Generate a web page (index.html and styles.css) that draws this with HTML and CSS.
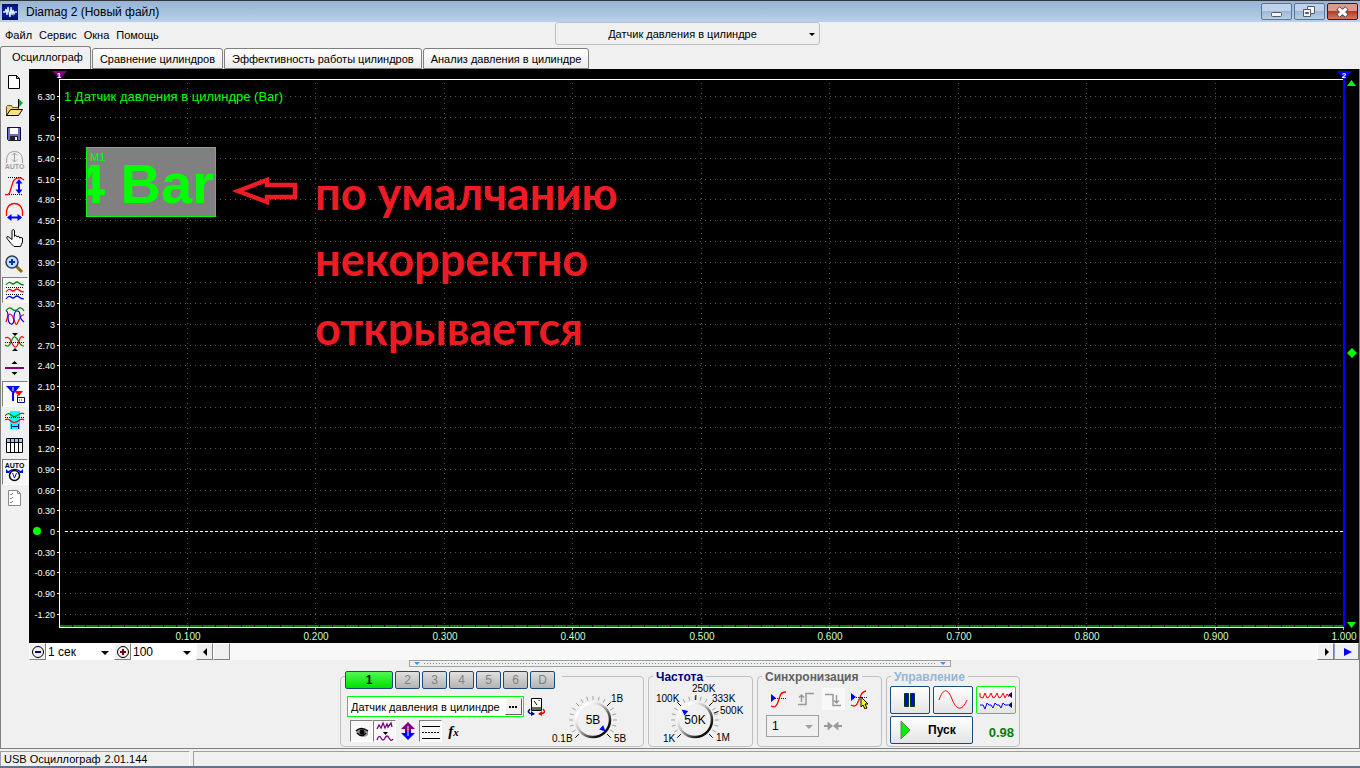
FILE: index.html
```html
<!DOCTYPE html>
<html lang="ru">
<head>
    <meta charset="UTF-8">
    <meta name="viewport" content="width=device-width, initial-scale=1.0">
    <title>Diamag 2 (Новый файл)</title>
    <link rel="stylesheet" href="styles.css">
</head>
<body>
    <header class="titlebar">
        <svg class="app-icon" width="16" height="16" viewBox="0 0 16 16">
            <rect width="16" height="16" fill="#0a1a8c"/>
            <path d="M0 13h16v3H0zM0 0h16v2H0z" fill="#0b1260"/>
            <path d="M1 8h2l1-3 1 6 1-8 2 10 1-10 1 8 1-5 1 4 1-2h2" fill="none" stroke="#d8ecff" stroke-width="1.3"/>
        </svg>
        <span class="title">Diamag 2 (Новый файл)</span>
        <div class="window-buttons">
            <button class="win-btn" aria-label="Свернуть">
                <svg width="30" height="16" viewBox="0 0 30 16"><rect x="9.5" y="8.500" width="10" height="4" rx="1" fill="#f4f4f4" stroke="#555b66"/></svg>
            </button>
            <button class="win-btn" aria-label="Восстановить">
                <svg width="30" height="16" viewBox="0 0 30 16"><path d="M12.500 2.500h7v7h-7z" fill="#f4f4f4" stroke="#555b66"/><path d="M8.500 5.500h7v7h-7z" fill="#f4f4f4" stroke="#555b66"/><path d="M10.500 8.500h3v1h-3z" fill="#9fb9d5" stroke="#555b66"/></svg>
            </button>
            <button class="win-btn win-close" aria-label="Закрыть">
                <svg width="30" height="16" viewBox="0 0 30 16"><path d="M10 4l9 8M19 4l-9 8" stroke="#4f4a55" stroke-width="5"/><path d="M10.500 4.500l8 7M18.500 4.500l-8 7" stroke="#fff" stroke-width="3"/></svg>
            </button>
        </div>
    </header>

    <div class="menubar">
        <nav class="menu">
            <a href="#">Файл</a>
            <a href="#">Сервис</a>
            <a href="#">Окна</a>
            <a href="#">Помощь</a>
        </nav>
        <span class="select-wrap sensor-select">
            <select aria-label="Тип датчика"><option>Датчик давления в цилиндре</option></select>
        </span>
    </div>

    <div class="tabs" role="tablist">
        <button class="tab active" role="tab">Осциллограф</button>
        <button class="tab" role="tab">Сравнение цилиндров</button>
        <button class="tab" role="tab">Эффективность работы цилиндров</button>
        <button class="tab" role="tab">Анализ давления в цилиндре</button>
    </div>

    <main class="workspace">
        <div class="main-row">
            <div class="toolbar">
                <button class="tool" aria-label="Новый"><svg viewBox="0 0 20 20"><path d="M3.500 3.500h8l3 3v10h-11zM11.500 3.500v3h3" fill="#fff" stroke="#000"/></svg></button>
                <button class="tool" aria-label="Открыть"><svg viewBox="0 0 20 20"><path d="M1.500 17.500v-9l1-1h4l1 2h6v8z" fill="#f7d46b" stroke="#6b5310"/><path d="M1.500 17.500l4-6h12l-4 6z" fill="#fbe08a" stroke="#000"/><path d="M13.500 1v9" stroke="#000"/><path d="M14 1l4 4-4 4z" fill="#00b030"/></svg></button>
                <button class="tool" aria-label="Сохранить"><svg viewBox="0 0 20 20"><path d="M2.500 3.500h13v13h-12l-1-1z" fill="#6a6fc0" stroke="#101030"/><path d="M5 4h8v6H5z" fill="#fff"/><path d="M5 12h8v5H5z" fill="#222"/><path d="M10 13h2v3h-2z" fill="#fff"/></svg></button>
                <button class="tool" aria-label="Автомасштаб" disabled><svg viewBox="0 0 20 20"><path d="M1.500 13V10Q2 1.500 9.500 1.500T17.500 10v3M9.500 3v9M7 5.500L9.500 3l2.500 2.500M7 9.500L9.500 12l2.500-2.500" fill="none" stroke="#a0a0a0"/><text x="9.500" y="19" class="auto-text" fill="#a0a0a0">AUTO</text></svg></button>
                <button class="tool" aria-label="Масштаб по вертикали"><svg viewBox="0 0 20 20"><path d="M0 18.500q4 1 5-3L8 6q2-5 8-4l3 2" fill="none" stroke="#f00" stroke-width="1.300"/><path d="M3 1.500h13M4 18.500h13" stroke="#000" stroke-dasharray="1 1"/><path d="M14 5v11" stroke="#00f" stroke-width="2"/><path d="M10.500 7.500L14 3l3.500 4.500zM10.500 13.500L14 18l3.500-4.500z" fill="#00f"/></svg></button>
                <button class="tool" aria-label="Масштаб по горизонтали"><svg viewBox="0 0 20 20"><path d="M1.500 14V9Q3 1.500 9.500 1.500T17.500 9v5" fill="none" stroke="#f00" stroke-width="1.300"/><path d="M4 15.500h12" stroke="#00f" stroke-width="2"/><path d="M6.500 12L2 15.500 6.500 19zM12.500 12l4.500 3.500-4.500 3.500z" fill="#00f"/></svg></button>
                <button class="tool" aria-label="Рука"><svg viewBox="0 0 20 20"><path d="M9 18.500l-3-3-4-5q-1-2 1-2l4 3V2.500q1-2 2.500 0v6q1-2 2.500 0v.5q1-1.500 2.500 0v1q1.500-1 3 0v4l-2 4.500z" fill="#fff" stroke="#000"/></svg></button>
                <button class="tool" aria-label="Лупа"><svg viewBox="0 0 20 20"><path d="M11 12l6 6" stroke="#8a6d10" stroke-width="3"/><circle cx="7" cy="8" r="6" fill="#bfe0ff" stroke="#333c5a" stroke-width="1.500"/><path d="M7 5v6M4 8h6" stroke="#0030c0" stroke-width="2"/></svg></button>
                <button class="tool pressed" aria-label="Раздельные графики"><svg viewBox="0 0 20 20"><path d="M1 5q3-4 5-2t4 0 4 0 5 2" fill="none" stroke="#080" stroke-width="1.200"/><path d="M1 12q3-4 5-2t4 0 4 0 5 2" fill="none" stroke="#f00" stroke-width="1.200"/><path d="M1 19q3-4 5-2t4 0 4 0 5 2" fill="none" stroke="#00f" stroke-width="1.200"/><path d="M1 7.500h18M1 14.500h18" stroke="#000" stroke-dasharray="1 1"/></svg></button>
                <button class="tool" aria-label="Наложенные графики"><svg viewBox="0 0 20 20"><path d="M1 5q3-5 6-2t6 0 6 2" fill="none" stroke="#080" stroke-width="1.200"/><path d="M1 16q2-8 4-8t4 6 3 4 3-6 4-3" fill="none" stroke="#f00" stroke-width="1.200"/><path d="M1 5q2 0 2 6t3 7 3-6 3-7 3 4 4 7" fill="none" stroke="#00f" stroke-width="1.200"/></svg></button>
                <button class="tool" aria-label="Сжать графики"><svg viewBox="0 0 20 20"><path d="M0 13q4 3 6-3t4-5 4 5 5 4" fill="none" stroke="#080" stroke-width="1.200"/><path d="M0 6q4-2 6 3t4 6 4-6 5-3" fill="none" stroke="#f00" stroke-width="1.200"/><path d="M0 10.500h19" stroke="#000" stroke-dasharray="1 1"/><path d="M7 1h6l-3 3zM7 19h6l-3-3z"/></svg></button>
                <button class="tool" aria-label="Нулевая линия"><svg viewBox="0 0 20 20"><path d="M6.500 6h6l-3-3zM6.500 14h6l-3 3z"/><path d="M0 10h19" stroke="#800080" stroke-width="2"/></svg></button>
                <button class="tool pressed" aria-label="Маркеры"><svg viewBox="0 0 20 20"><path d="M1 2h14L8.500 10zM7 9h2v8H7z" fill="#00f"/><path d="M9 7h9l-4 5zM12 11h1v5h-1z" fill="#f00"/><path d="M8 3v4" stroke="#fff"/><path d="M12.500 13.500h7v5h-7z" fill="#fff" stroke="#000080"/><path d="M14 16h1M16 16h1" stroke="#00f"/></svg></button>
                <button class="tool" aria-label="Измерение"><svg viewBox="0 0 20 20"><path d="M5 1h10v18H5z" fill="#0ff"/><path d="M0 6q3-4 6-1t7 0 6-1" fill="none" stroke="#080" stroke-width="1.200"/><path d="M0 10q3-2 6 1t7 0 6-1" fill="none" stroke="#f00" stroke-width="1.200"/><path d="M0 7.500h19" stroke="#000" stroke-dasharray="1 1"/><path d="M6.500 14v5M13.500 14v5M6 16.500h8" stroke="#000080"/></svg></button>
                <button class="tool" aria-label="Таблица"><svg viewBox="0 0 20 20"><path d="M1.500 2.500h16v14h-16z" fill="#fff" stroke="#000"/><path d="M2 3h15v3H2z" fill="#9cc8f0"/><path d="M1 6.500h17M5.500 3v13M9.500 3v13M13.500 3v13" stroke="#000"/></svg></button>
                <button class="tool pressed" aria-label="Авто"><svg viewBox="0 0 20 20"><text x="9.500" y="6" class="auto-text">AUTO</text><path d="M3 10q7-5 13 0" fill="none" stroke="#00f" stroke-width="1.500"/><path d="M1 7v4h4zM18 7v4h-4z" fill="#00f"/><circle cx="9.500" cy="13.500" r="5" fill="#fff" stroke="#000" stroke-width="1.500"/><path d="M7.500 11l2 5 2-5" fill="none" stroke="#00f"/></svg></button>
                <button class="tool" aria-label="Отчёт" disabled><svg viewBox="0 0 20 20"><path d="M3.500 2.500h9l3 3v12h-12zM12.500 2.500v3h3" fill="#fff" stroke="#888"/><path d="M5 6l1 1 2-2M5 10l1 1 2-2M5 14l1 1 2-2" fill="none" stroke="#888"/></svg></button>
            </div>

            <div class="scope">
                <svg id="chart" class="chart"></svg>
                <div class="channel-title">1 Датчик давления в цилиндре (Bar)</div>
                <div class="measure-box">
                    <span class="measure-name">M1</span>
                    <span class="measure-value">4 Bar</span>
                </div>
                <svg class="note-arrow" width="68" height="28" viewBox="0 0 68 28">
                    <path d="M7 14L36 3v5h28v12H36v5z" fill="none" stroke="#ed1c24" stroke-width="4.500"/>
                </svg>
                <div class="note">
                    <p>по умалчанию</p>
                    <p>некорректно</p>
                    <p>открывается</p>
                </div>
            </div>
        </div>

        <div class="timebar">
            <button class="bar-btn" aria-label="Уменьшить"><svg width="14" height="14" viewBox="0 0 14 14"><circle cx="7" cy="7" r="5.500" fill="none" stroke="#000"/><path d="M4 7h6" stroke="#000080" stroke-width="2"/></svg></button>
            <span class="select-wrap time-select"><select aria-label="Время"><option>1 сек</option></select></span>
            <button class="bar-btn" aria-label="Увеличить"><svg width="14" height="14" viewBox="0 0 14 14"><circle cx="7" cy="7" r="5.500" fill="none" stroke="#000"/><path d="M4 7h6M7 4v6" stroke="#800000" stroke-width="2"/></svg></button>
            <span class="select-wrap zoom-select"><select aria-label="Масштаб"><option>100</option></select></span>
            <button class="bar-btn" aria-label="Влево"><svg width="14" height="14" viewBox="0 0 14 14"><path d="M9 3v8L5 7z"/></svg></button>
            <div class="track"><button class="bar-btn thumb" aria-label="Ползунок"></button></div>
            <button class="bar-btn" aria-label="Вправо"><svg width="14" height="14" viewBox="0 0 14 14"><path d="M6 3v8l4-4z"/></svg></button>
            <button class="bar-btn play-btn" aria-label="Воспроизвести"><svg width="14" height="14" viewBox="0 0 14 14"><path d="M4 3v8l8-4z" fill="#00f"/></svg></button>
        </div>

        <div class="panel">
            <div class="splitter"></div>
            <div class="groups">
                <fieldset class="group group-channels">
                    <legend class="channels">
                        <button class="channel on">1</button>
                        <button class="channel">2</button>
                        <button class="channel">3</button>
                        <button class="channel">4</button>
                        <button class="channel">5</button>
                        <button class="channel">6</button>
                        <button class="channel">D</button>
                    </legend>
                    <div class="channel-left">
                        <div class="sensor-row">
                            <div class="sensor-field">
                                <input type="text" aria-label="Датчик канала" value="Датчик давления в цилиндре">
                                <button class="more-btn" aria-label="Выбрать"><svg width="15" height="15" viewBox="0 0 15 15"><path d="M3 7h2v2H3zM6 7h2v2H6zM9 7h2v2H9z"/></svg></button>
                            </div>
                            <svg width="20" height="20" viewBox="0 0 20 20"><path d="M4.500 1.500h10v12h-10z" fill="#fff" stroke="#000"/><path d="M5 11h9v2H5z" fill="#666"/><path d="M5 10.500h9" stroke="#0a0"/><path d="M7 4l3 4M12 3v1" stroke="#000"/><path d="M3 12q-4 4 2 5" fill="none" stroke="#000080" stroke-width="1.500"/><path d="M4 14v5l4-2z" fill="#000080"/><path d="M16 12q4 4-3 5" fill="none" stroke="#f00" stroke-width="1.500"/><path d="M15 14v5l-4-2z" fill="#f00"/></svg>
                        </div>
                        <div class="icon-row">
                            <button class="mini pressed" aria-label="Показать"><svg viewBox="0 0 20 20"><path d="M4 11q6-7 12-1v4q-5 4-9 0z" fill="#999"/><path d="M4 10q5-5 12 0M5 12q5 5 9 0" stroke="#000" stroke-width="1.500" fill="none"/><circle cx="10" cy="11" r="2.500"/></svg></button>
                            <button class="mini pressed" aria-label="Фильтр"><svg viewBox="0 0 20 20"><path d="M2 8l2-4 2 3 2-5 2 5 2-4 1 3 3-4 1 4M2 19q2-6 4-2t4 0 4 0 4 1" fill="none" stroke="#800080" stroke-width="1.300"/><path d="M8 11h5l-2.500 3z"/></svg></button>
                            <button class="mini" aria-label="Сдвиг"><svg viewBox="0 0 20 20"><path d="M10 1l7 7h-4v3H7V8H3z" fill="#800080"/><path d="M10 19l7-7h-4v-2H7v2H3z" fill="#00f"/><path d="M10 5v10" stroke="#f0f0f0"/></svg></button>
                            <button class="mini pressed" aria-label="Линии"><svg viewBox="0 0 20 20"><path d="M1 5.500h18M1 17.500h18" stroke="#000"/><path d="M1 11.500h18" stroke="#000" stroke-dasharray="2 1"/></svg></button>
                            <button class="mini fx" aria-label="Функция">f<small>x</small></button>
                        </div>
                    </div>
                    <svg id="rangeKnob" class="knob" width="92" height="66" viewBox="0 0 92 66"></svg>
                </fieldset>

                <fieldset class="group group-freq">
                    <legend>Частота</legend>
                    <svg id="freqKnob" class="knob" width="100" height="66" viewBox="0 0 100 66"></svg>
                </fieldset>

                <fieldset class="group group-sync">
                    <legend>Синхронизация</legend>
                    <div class="sync-icons">
                        <button class="sync-btn" aria-label="Уровень"><svg viewBox="0 0 20 20"><path d="M2 17q5 3 7-4l2-6q1-4 6-4" fill="none" stroke="#f00" stroke-width="1.300"/><path d="M2 5l5 4-5 4z" fill="#00f"/><path d="M6 9.500h12" stroke="#00f" stroke-dasharray="1 1"/></svg></button>
                        <button class="sync-btn" aria-label="Фронт"><svg viewBox="0 0 20 20"><path d="M2 15.500h8v-11h8M5.500 13V6M3 8.500L5.500 6 8 8.500" fill="none" stroke="#999" stroke-width="1.500"/></svg></button>
                        <button class="sync-btn dither" aria-label="Спад"><svg viewBox="0 0 20 20"><path d="M2 5.500h8v11h8M13.500 6v8M11 11.500l2.500 2.500 2.500-2.500" fill="none" stroke="#999" stroke-width="1.500"/></svg></button>
                        <button class="sync-btn" aria-label="Автоуровень"><svg viewBox="0 0 20 20"><path d="M1 16q5 3 7-3l3-7q1-3 5-4" fill="none" stroke="#f00" stroke-width="1.300"/><path d="M1 4l5 4-5 4z" fill="#00f"/><path d="M6 8.500h11" stroke="#00f" stroke-dasharray="1 1"/><path d="M11 8l7 7h-3l2 4-2 1-2-4-2 2z" fill="#ff0" stroke="#000"/></svg></button>
                    </div>
                    <div class="sync-row">
                        <span class="select-wrap sync-select"><select aria-label="Канал синхронизации" disabled><option>1</option></select></span>
                        <svg width="18" height="10" viewBox="0 0 20 10"><path d="M0 4h4V0l6 5-6 5V6H0zM20 4h-4V0l-6 5 6 5V6h4z" fill="#999"/></svg>
                    </div>
                </fieldset>

                <fieldset class="group group-control">
                    <legend>Управление</legend>
                    <div class="control-grid">
                        <button class="ctl" aria-label="Пауза"><svg width="36" height="24" viewBox="0 0 36 24"><path d="M12.500 5.500h4v13h-4zM18.500 5.500h4v13h-4z" fill="#00f" stroke="#004000"/></svg></button>
                        <button class="ctl" aria-label="Синус"><svg width="36" height="24" viewBox="0 0 36 24"><path d="M4 12C8 0 13 0 17 11S27 24 32 12" fill="none" stroke="#f00"/></svg></button>
                        <button class="ctl ctl-on" aria-label="Сигналы"><svg width="36" height="24" viewBox="0 0 36 24"><path d="M2 5v4l3 1 2-5 2 5 2-1 2-4 2 5 2-1 2-4 2 5 2-1 2-4 2 5 2-4 2 3" fill="none" stroke="#f00"/><path d="M2 17h3l2 4 2-6 2 2h2l2 3 2-5 2 2h2l2 3 2-5 2 2h3" fill="none" stroke="#00f"/><path d="M34 4v6l-4-3zM34 14v6l-4-3z" fill="#000080"/></svg></button>
                        <button class="ctl start-btn"><svg width="14" height="20" viewBox="0 0 14 20"><path d="M3 1v18l9-9z" fill="#00f000" stroke="#777"/></svg><span>Пуск</span></button>
                        <output class="level">0.98</output>
                    </div>
                </fieldset>
            </div>
        </div>
    </main>

    <footer class="statusbar">
        <div class="status-cell status-name"><span>USB Осциллограф</span><span>2.01.144</span></div>
        <div class="status-cell status-rest"></div>
    </footer>

    <script>
        const chart = document.getElementById('chart');

        function line(x1, y1, x2, y2, cls) {
            return `<line x1="${x1}" y1="${y1}" x2="${x2}" y2="${y2}" class="${cls}"/>`;
        }

        function drawChart() {
            const w = chart.clientWidth;
            const h = chart.clientHeight;
            const left = 30, right = w - 15, top = 10, bottom = h - 16;
            const maxV = 6.544, minV = -1.39;
            const yOf = v => Math.round(top + (maxV - v) / (maxV - minV) * (bottom - top));
            let out = '';

            for (let i = 21; i >= -4; i--) {
                const v = i * 0.3;
                const y = yOf(v);
                const label = i % 10 === 0 ? v.toFixed(0) : v.toFixed(2);
                out += line(left + 6, y + 0.5, right, y + 0.5, i === 0 ? 'zero' : 'grid');
                out += line(left - 2, y + 0.5, left + 1, y + 0.5, 'axis');
                out += `<text x="${left - 4}" y="${y + 4}" class="y-label">${label}</text>`;
            }

            for (let i = 1; i <= 10; i++) {
                const x = Math.round(left + (right - left) * i / 10);
                if (i < 10) {
                    out += line(x - 0.5, top + 4, x - 0.5, bottom, 'grid');
                }
                out += line(x - 0.5, bottom, x - 0.5, bottom + 3, 'tick');
                out += `<text x="${x}" y="${h - 3}" class="x-label">${(i / 10).toFixed(3)}</text>`;
            }

            out += line(left, top + 0.5, right, top + 0.5, 'axis');
            out += line(left + 0.5, top, left + 0.5, bottom, 'axis');
            out += line(left, bottom + 0.5, right, bottom + 0.5, 'axis');
            out += line(left + 1, bottom - 1, right, bottom - 1, 'signal');
            out += line(right, top - 2, right, bottom, 'cursor');

            // cursor flags and level markers
            out += `<path d="M${left - 7} 2h15l-7 8z" fill="#800080"/><text x="${left}" y="9" class="flag">1</text>`;
            out += `<path d="M${right - 7} 2h15l-8 8z" fill="#00f"/><text x="${right}" y="9" class="flag">2</text>`;
            out += `<path d="M${w - 12} 17h9l-4.500-6zM${w - 12} ${h - 21}h9l-4.500 6z" fill="#0f0"/>`;
            out += `<path d="M${w - 12} ${top + (bottom - top) / 2}l5-5 5 5-5 5z" fill="#0f0"/>`;
            out += `<circle cx="8" cy="${yOf(0)}" r="4" fill="#0f0"/>`;
            chart.innerHTML = out;
        }

        function drawKnob(id, cx, cy, value, pointer, labels) {
            let out = '<defs><linearGradient id="' + id + 'G" x1="0" y1="0" x2="1" y2="1"><stop offset="0.2" stop-color="#fff"/><stop offset="0.45" stop-color="#bbb"/><stop offset="0.8" stop-color="#111"/></linearGradient></defs>';
            const point = (a, r) => {
                const t = a * Math.PI / 180;
                return [(cx + Math.sin(t) * r).toFixed(1), (cy - Math.cos(t) * r).toFixed(1)];
            };
            for (let a = -120; a <= 120; a += 15) {
                out += line(...point(a, 20), ...point(a, 24), 'knob-tick');
            }
            labels.forEach(([a, text, x, y]) => {
                out += line(...point(a, 20), ...point(a, 25), 'knob-mark');
                out += `<text x="${x}" y="${y}" class="knob-label">${text}</text>`;
            });
            out += `<circle cx="${cx}" cy="${cy}" r="17" fill="#f0f0f0" stroke="url(#${id}G)" stroke-width="2.500"/>`;
            const [px, py] = point(pointer, 14);
            out += `<path d="M-3 3h6L0-3z" fill="#00f" transform="translate(${px} ${py}) rotate(${pointer})"/>`;
            out += `<text x="${cx}" y="${cy + 4}" class="knob-value">${value}</text>`;
            document.getElementById(id).innerHTML = out;
        }

        drawChart();
        window.addEventListener('resize', drawChart);
        drawKnob('rangeKnob', 42, 39, '5В', 132, [
            [-135, '0.1В', 1, 61], [45, '1В', 60, 21], [135, '5В', 63, 61]
        ]);
        drawKnob('freqKnob', 46, 39, '50K', -52, [
            [-135, '1K', 14, 61], [-45, '100K', 7, 21], [2, '250K', 43, 11],
            [45, '333K', 63, 21], [70, '500K', 71, 33], [135, '1M', 67, 60]
        ]);
    </script>
</body>
</html>
```

FILE: styles.css
```css
* {
    box-sizing: border-box;
}
body {
    margin: 0;
    height: 100vh;
    display: flex;
    flex-direction: column;
    overflow: hidden;
    background-color: #f0f0f0;
    color: #000;
    font-family: "Liberation Sans", Arial, sans-serif;
    font-size: 11px;
}
button, select, input {
    font-family: inherit;
    font-size: inherit;
    color: inherit;
    margin: 0;
    padding: 0;
}
svg {
    display: block;
    flex-shrink: 0;
}

/* title bar */
.titlebar {
    display: flex;
    align-items: center;
    height: 22px;
    padding: 0 2px;
    border-top: 1px solid #35363c;
    background: linear-gradient(#98b4d4, #b8d1eb);
}
.title {
    margin-left: 8px;
    font-size: 12px;
}
.window-buttons {
    display: flex;
    gap: 2px;
    margin-left: auto;
}
.win-btn {
    width: 31px;
    height: 17px;
    display: flex;
    align-items: center;
    justify-content: center;
    overflow: hidden;
    border: 1px solid #5d7591;
    border-radius: 2px;
    background: linear-gradient(#bfd2e8 50%, #9db8d6 50%, #b7cfe8);
}
.win-close {
    border-color: #4a1119;
    background: linear-gradient(#dc9a8c 45%, #b83a26 50%, #d57a5c);
}

/* menu */
.menubar {
    display: grid;
    grid-template-columns: 555fr 265px 540fr;
    height: 24px;
}
.menu {
    display: flex;
    align-items: center;
    gap: 7px;
    padding: 2px 0 0 5px;
}
.menu a {
    color: #000;
    text-decoration: none;
}
.select-wrap {
    position: relative;
    display: block;
}
.select-wrap select {
    display: block;
    width: 100%;
    height: 100%;
    appearance: none;
    border: none;
    border-radius: 0;
    background: #fff;
}
.select-wrap::after {
    content: "";
    position: absolute;
    right: 5px;
    top: 50%;
    margin-top: -1px;
    border: 4px solid transparent;
    border-top-color: #000;
    border-bottom: none;
    pointer-events: none;
}
.sensor-select {
    height: 23px;
    border: 1px solid #c0c0c0;
    border-radius: 3px;
}
.sensor-select select {
    background: transparent;
    text-align-last: center;
    padding-right: 10px;
}
.sensor-select::after {
    right: 4px;
    border-width: 3px;
}

/* tabs */
.tabs {
    display: flex;
    align-items: flex-end;
    gap: 1px;
    height: 23px;
}
.tab {
    height: 21px;
    padding: 0 7px;
    border: 1px solid #808080;
    border-radius: 3px 3px 0 0;
    background: linear-gradient(#fff, #ececec);
}
.tab.active {
    height: 23px;
    padding: 0 7px 3px 11px;
    border-bottom: none;
    background: #f0f0f0;
}

/* workspace */
.workspace {
    flex: 1;
    min-height: 0;
    display: flex;
    flex-direction: column;
    border: 1px solid #808080;
    border-top: none;
}
.main-row {
    flex: 1;
    min-height: 0;
    display: flex;
}
.toolbar {
    width: 28px;
    display: flex;
    flex-direction: column;
    padding: 0 1px;
}
.tool {
    width: 26px;
    height: 26px;
    padding: 2px;
    border: 1px solid transparent;
    background: none;
}
.tool svg, .mini svg, .sync-btn svg {
    width: 20px;
    height: 20px;
}
.tool.pressed, .mini.pressed {
    border-color: #808080 #fff #fff #808080;
    background: #f8f8f8;
}
.auto-text {
    font-size: 7px;
    font-weight: bold;
    text-anchor: middle;
}
.scope {
    position: relative;
    flex: 1;
    min-width: 0;
    background: #000;
}
.chart {
    position: absolute;
    width: 100%;
    height: 100%;
}
.grid {
    stroke: #555;
    stroke-dasharray: 1 4;
}
.zero {
    stroke: #fff;
    stroke-dasharray: 3 2;
}
.axis {
    stroke: #fff;
    stroke-width: 1px;
}
.tick {
    stroke: #aaa;
}
.signal {
    stroke: #0f0;
    stroke-dasharray: 12 1;
}
.cursor {
    stroke: #00f;
    stroke-width: 2px;
}
.y-label {
    fill: #fff;
    font-size: 9px;
    text-anchor: end;
}
.x-label {
    fill: #ccffcc;
    font-size: 10px;
    text-anchor: middle;
}
.flag {
    fill: #fff;
    font-size: 8px;
    font-weight: bold;
    text-anchor: middle;
}
.channel-title {
    position: absolute;
    left: 35px;
    top: 20px;
    color: #0f0;
    font-size: 13px;
    line-height: 16px;
}
.measure-box {
    position: absolute;
    left: 57px;
    top: 78px;
    width: 130px;
    height: 70px;
    overflow: hidden;
    padding: 0 1px;
    border: 1px solid #0f0;
    background: #808080;
    color: #0f0;
}
.measure-name {
    position: absolute;
    left: 3px;
    top: 3px;
}
.measure-value {
    display: flex;
    justify-content: flex-end;
    overflow: hidden;
    font-size: 56px;
    font-weight: bold;
    line-height: 72px;
    white-space: nowrap;
}
.note-arrow {
    position: absolute;
    left: 202px;
    top: 108px;
}
.note {
    position: absolute;
    left: 286px;
    top: 91px;
    color: #ed1c24;
    font-family: Lato, "Open Sans", sans-serif;
    font-size: 45px;
    font-weight: bold;
    line-height: 66px;
}
.note p {
    margin: 0;
}
.note p:last-child {
    margin-top: 3px;
}

/* time bar */
.timebar {
    display: flex;
    height: 17px;
    margin-left: 28px;
    background: #fff;
}
.bar-btn {
    width: 17px;
    height: 17px;
    display: flex;
    align-items: center;
    justify-content: center;
    border: 1px solid;
    border-color: #fff #808080 #808080 #fff;
    background: #f0f0f0;
}
.time-select {
    width: 68px;
}
.zoom-select {
    width: 65px;
}
.time-select select, .zoom-select select {
    padding-left: 2px;
    font-size: 12px;
}
.track {
    flex: 1;
    background: #f8f8f8;
}
.play-btn {
    width: 25px;
    border-left-color: #7fa0c8;
}

/* bottom panel */
.panel {
    height: 88px;
    display: flex;
    flex-direction: column;
    align-items: center;
}
.splitter {
    display: flex;
    align-items: center;
    justify-content: space-between;
    width: 542px;
    height: 7px;
    padding: 0 4px;
    border: 1px solid #a0a0a0;
    background: repeating-linear-gradient(90deg, #3399ff 0 1px, transparent 1px 3px) center / 512px 1px no-repeat;
}
.splitter::before, .splitter::after {
    content: "";
    border: 3px solid transparent;
    border-top-color: #3399ff;
    border-bottom: none;
}
.groups {
    display: flex;
    gap: 4px;
    margin-top: 4px;
}
.group {
    height: 76px;
    min-width: 0;
    margin: 0;
    padding: 0;
    border: 1px solid #c0c0c0;
    border-radius: 4px;
}
.group legend {
    height: 10px;
    margin-left: 4px;
    padding: 0 3px;
    font-weight: bold;
    font-size: 12px;
    line-height: 12px;
}
.group-channels {
    position: relative;
    width: 304px;
}
.group-freq {
    width: 105px;
}
.group-sync {
    width: 125px;
}
.group-control {
    width: 134px;
}
.group-freq legend {
    color: #000080;
}
.group-sync legend {
    color: #606060;
}
.group-control legend {
    color: #98b4d4;
}
.group .channels {
    display: flex;
    gap: 2px;
    padding: 0 7px 0 0;
}
.channel {
    width: 25px;
    height: 18px;
    border: 1px solid #1b4a7a;
    border-radius: 2px;
    background: linear-gradient(#e0e0e0, #b4b4b4);
    color: #808080;
}
.channel.on {
    width: 48px;
    background: linear-gradient(#50f850, #00e000);
    color: #000;
    font-weight: bold;
}
.channel-left {
    width: 210px;
    padding: 15px 0 0 6px;
}
.sensor-row {
    display: flex;
    gap: 3px;
    align-items: center;
}
.sensor-field {
    display: flex;
    align-items: center;
    width: 177px;
    height: 21px;
    padding-right: 1px;
    border: 1px solid #0f0;
    background: #fff;
}
.sensor-field input {
    flex: 1;
    min-width: 0;
    padding-left: 3px;
    border: none;
    outline: none;
    background: #fff;
}
.more-btn {
    width: 17px;
    height: 17px;
    border: 1px solid;
    border-color: #fff #606060 #606060 #fff;
    background: #f0f0f0;
}
.icon-row {
    display: flex;
    padding: 3px 0 0 3px;
}
.mini {
    width: 23px;
    height: 22px;
    padding: 0 1px;
    border: 1px solid transparent;
    background: none;
}
.fx {
    font-family: "Liberation Serif", serif;
    font-size: 15px;
    font-style: italic;
    font-weight: bold;
}
.fx small {
    font-size: 11px;
}
.group-channels .knob {
    position: absolute;
    right: 0;
    top: 0;
}
.knob-tick {
    stroke: #a0a0a0;
}
.knob-mark {
    stroke: #000;
}
.knob-label {
    font-size: 10px;
}
.knob-value {
    font-size: 12px;
    text-anchor: middle;
}

/* sync */
.sync-icons {
    display: flex;
    gap: 4px;
    padding: 7px 0 0 10px;
}
.sync-btn {
    width: 23px;
    height: 22px;
    padding: 1px;
    border: none;
    background: none;
}
.dither {
    background: #f8f8f8;
}
.sync-row {
    display: flex;
    align-items: center;
    gap: 5px;
    padding: 5px 0 0 8px;
}
.sync-select {
    width: 53px;
    height: 22px;
    border: 1px solid #a0a0a0;
}
.sync-select select {
    padding-left: 5px;
    background: #f0f0f0;
    color: #000;
    font-size: 12px;
    opacity: 1;
}
.sync-select::after {
    border-top-color: #a0a0a0;
}

/* control */
.control-grid {
    display: grid;
    grid-template-columns: 40px 40px 40px;
    grid-template-rows: 28px 28px;
    gap: 2px 3px;
    padding: 5px 0 0 3px;
}
.ctl {
    display: flex;
    align-items: center;
    justify-content: center;
    border: 1px solid #1b4a7a;
    border-radius: 2px;
    background: linear-gradient(#fff, #e4e4e4);
}
.ctl-on {
    border-color: #0f0;
}
.start-btn {
    grid-column: span 2;
    justify-content: flex-start;
    gap: 16px;
    padding-left: 7px;
    font-size: 12px;
    font-weight: bold;
}
.level {
    align-self: center;
    padding: 4px 2px 0 0;
    color: #008000;
    font-size: 13px;
    font-weight: bold;
    text-align: right;
}

/* status bar */
.statusbar {
    display: flex;
    gap: 3px;
    height: 19px;
    padding-top: 2px;
    border-bottom: 2px solid #5d7591;
}
.status-cell {
    display: flex;
    align-items: center;
    gap: 4px;
    padding-left: 3px;
    border-top: 1px solid #a0a0a0;
    border-left: 1px solid #a0a0a0;
}
.status-name {
    width: 190px;
    border-right: 1px solid #fff;
}
.status-rest {
    flex: 1;
}
```
